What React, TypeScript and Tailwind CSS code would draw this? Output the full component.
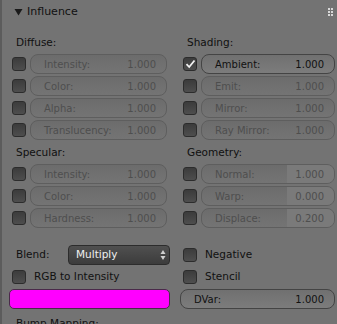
import { ReactNode } from "react";

type Row = { label: string; value: string; on?: boolean; active?: boolean; slider?: boolean };

const diffuse: Row[] = [
  { label: "Intensity:", value: "1.000" },
  { label: "Color:", value: "1.000" },
  { label: "Alpha:", value: "1.000" },
  { label: "Translucency:", value: "1.000" },
];
const shading: Row[] = [
  { label: "Ambient:", value: "1.000", on: true, active: true },
  { label: "Emit:", value: "1.000" },
  { label: "Mirror:", value: "1.000" },
  { label: "Ray Mirror:", value: "1.000" },
];
const specular: Row[] = [
  { label: "Intensity:", value: "1.000" },
  { label: "Color:", value: "1.000" },
  { label: "Hardness:", value: "1.000" },
];
const geometry: Row[] = [
  { label: "Normal:", value: "1.000", slider: true },
  { label: "Warp:", value: "0.000", slider: true },
  { label: "Displace:", value: "0.200", slider: true },
];

function Check({ on }: { on?: boolean }) {
  return (
    <div className="flex h-[14px] w-[14px] shrink-0 items-center justify-center rounded-[3px] border border-[#2c2c2c] bg-gradient-to-b from-[#3c3c3c] to-[#4e4e4e]">
      {on && (
        <svg width="11" height="10" viewBox="0 0 11 10">
          <path d="M1.5 5.2 L4.2 8 L9.5 1.5" fill="none" stroke="#f2f2f2" strokeWidth="1.8" />
        </svg>
      )}
    </div>
  );
}

function Field({ label, value, active, slider }: Row) {
  return (
    <div
      className={`relative flex h-[20px] flex-1 items-center justify-between overflow-hidden rounded-[8px] border pl-[13px] pr-[10px] ${
        active
          ? "border-[#444444] bg-gradient-to-b from-[#707070] to-[#7c7c7c] text-[#111111]"
          : "border-[#5e5e5e] bg-gradient-to-b from-[#6c6c6c] to-[#747474] text-[#4e4e4e]"
      }`}
    >
      {slider && <div className="absolute inset-y-0 right-0 w-[47px] bg-[#7a7a7a]" />}
      <span className="relative">{label}</span>
      <span className="relative">{value}</span>
    </div>
  );
}

function Group({ title, rows }: { title: string; rows: Row[] }) {
  return (
    <div className="flex flex-col">
      <div className="flex h-[20px] items-center pl-[4px] text-[10.5px] text-[#101010]">{title}</div>
      {rows.map((r) => (
        <div key={r.label} className="flex h-[22px] items-center gap-[4px]">
          <Check on={r.on} />
          <Field {...r} />
        </div>
      ))}
    </div>
  );
}

function Cell({ children }: { children: ReactNode }) {
  return <div className="flex flex-col">{children}</div>;
}

export default function App() {
  return (
    <div
      className="relative h-[324px] w-[337px] overflow-hidden border-l-2 border-[#5c5c5c] bg-[#737373] text-[10px]"
      style={{ fontFamily: '"DejaVu Sans", Verdana, sans-serif' }}
    >
      <div className="flex h-[24px] items-center pl-[12px] pr-[4px]">
        <svg width="9" height="8" viewBox="0 0 9 8" className="mr-[4px]">
          <path d="M0.5 1 L8.5 1 L4.5 7.5 Z" fill="#1a1a1a" />
        </svg>
        <span className="text-[11px] text-[#111111]">Influence</span>
        <div className="ml-auto grid grid-cols-2 gap-x-[1px] gap-y-[1px]">
          {Array.from({ length: 6 }).map((_, i) => (
            <div key={i} className="h-[2px] w-[2px] bg-[#d8d8d8]" />
          ))}
        </div>
      </div>

      <div className="mt-[9px] grid grid-cols-[155px_152px] gap-x-[16px] pl-[10px]">
        <Cell>
          <Group title="Diffuse:" rows={diffuse} />
        </Cell>
        <Cell>
          <Group title="Shading:" rows={shading} />
        </Cell>
        <Cell>
          <div className="mt-[2px]">
            <Group title="Specular:" rows={specular} />
          </div>
        </Cell>
        <Cell>
          <div className="mt-[2px]">
            <Group title="Geometry:" rows={geometry} />
          </div>
        </Cell>
      </div>

      <div className="mt-[15px] grid grid-cols-[161px_155px] gap-x-[10px] pl-[7px]">
        <div className="flex flex-col">
          <div className="flex h-[22px] items-center">
            <span className="pl-[7px] text-[10.5px] text-[#111111]">Blend:</span>
            <div className="ml-auto flex h-[20px] w-[102px] items-center justify-between rounded-[4px] border border-[#2c2c2c] bg-gradient-to-b from-[#505050] to-[#3c3c3c] pl-[7px] pr-[3px] text-[10.5px] text-[#f0f0f0]">
              <span>Multiply</span>
              <svg width="6" height="12" viewBox="0 0 6 12">
                <path d="M0.5 5 L3 1 L5.5 5 Z M0.5 7 L3 11 L5.5 7 Z" fill="#d0d0d0" />
              </svg>
            </div>
          </div>
          <div className="flex h-[22px] items-center gap-[8px] pl-[3px]">
            <Check />
            <span className="text-[10.5px] text-[#111111]">RGB to Intensity</span>
          </div>
          <div className="mt-[1px] h-[20px] rounded-[5px] border border-[#4a2a4a] bg-[#ff00ff]" />
        </div>
        <div className="flex flex-col">
          <div className="flex h-[22px] items-center gap-[8px] pl-[3px]">
            <Check />
            <span className="text-[10.5px] text-[#111111]">Negative</span>
          </div>
          <div className="flex h-[22px] items-center gap-[8px] pl-[3px]">
            <Check />
            <span className="text-[10.5px] text-[#111111]">Stencil</span>
          </div>
          <div className="mt-[1px] flex">
            <Field label="DVar:" value="1.000" active />
          </div>
        </div>
      </div>

      <div className="mt-[7px] pl-[14px] text-[10.5px] text-[#111111]">Bump Mapping:</div>
    </div>
  );
}
